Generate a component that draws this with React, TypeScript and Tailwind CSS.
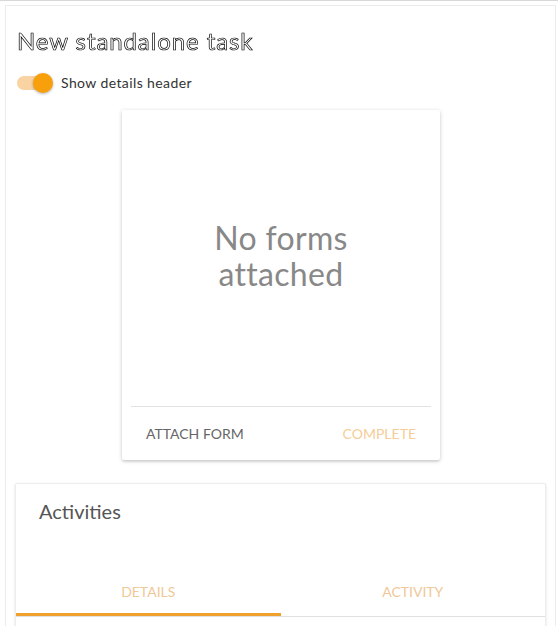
import React from "react";

export default function App() {
  return (
    <div
      className="w-[558px] h-[626px] overflow-hidden bg-white border-t border-[#d8d8d8] pt-[4px] pl-[5px] pr-[2px]"
      style={{ fontFamily: "Lato, 'Noto Sans', sans-serif" }}
    >
      <div className="h-[640px] border-l border-t border-r border-[#ececec] pr-[1px]">
        <div className="pl-[11px] pt-[20px]">
          <h1 className="text-[24px] leading-[30px] text-white [-webkit-text-stroke:0.7px_#000] tracking-[0.9px] font-normal will-change-transform">
            New standalone task
          </h1>
          <div className="flex items-center mt-[16px]">
            <div className="relative w-[36px] h-[20px] flex items-center">
              <div className="w-[34px] h-[14px] rounded-full bg-[#f9d3a2]" />
              <div className="absolute left-[16px] top-0 w-[20px] h-[20px] rounded-full bg-[#f7a00c] shadow-[0_1px_3px_rgba(0,0,0,0.3)]" />
            </div>
            <span className="ml-[8px] text-[14px] tracking-[0.4px] text-[#333]">Show details header</span>
          </div>
        </div>
        <div className="flex justify-center mt-[17px] pl-[2px]">
          <div className="w-[318px] h-[350px] bg-white rounded-[2px] shadow-[0_1px_4px_rgba(0,0,0,0.2),0_2px_2px_rgba(0,0,0,0.06)] flex flex-col px-[9px]">
            <div className="flex-1 flex items-center justify-center pb-[4px]">
              <div className="text-[32px] leading-[36px] text-[#888] text-center tracking-[0.3px]">
                No forms
                <br />
                attached
              </div>
            </div>
            <div className="border-t border-[#e2e2e2] h-[54px] flex items-center justify-between px-[15px]">
              <span className="text-[14px] text-[#666]">ATTACH FORM</span>
              <span className="text-[14px] text-[#f5cd98]">COMPLETE</span>
            </div>
          </div>
        </div>
        <div className="mt-[23px] ml-[9px] mr-[8px] border border-[#ededed] shadow-[0_1px_3px_rgba(0,0,0,0.12)] rounded-[2px] bg-white">
          <div className="pl-[23px] pt-[12px] h-[85px]">
            <div className="text-[20px] text-[#555]">Activities</div>
          </div>
          <div className="flex">
            <div className="flex-1 flex flex-col items-center">
              <div className="h-[44px] flex items-center text-[14px] text-[#efc898]">DETAILS</div>
              <div className="w-full h-[3px] bg-[#f0a02c]" />
            </div>
            <div className="flex-1 flex flex-col items-center">
              <div className="h-[44px] flex items-center text-[14px] text-[#efc898]">ACTIVITY</div>
              <div className="w-full h-[3px]" />
            </div>
          </div>
          <div className="h-[1px] bg-[#e0e0e0]" />
          <div className="h-[20px]" />
        </div>
      </div>
    </div>
  );
}
